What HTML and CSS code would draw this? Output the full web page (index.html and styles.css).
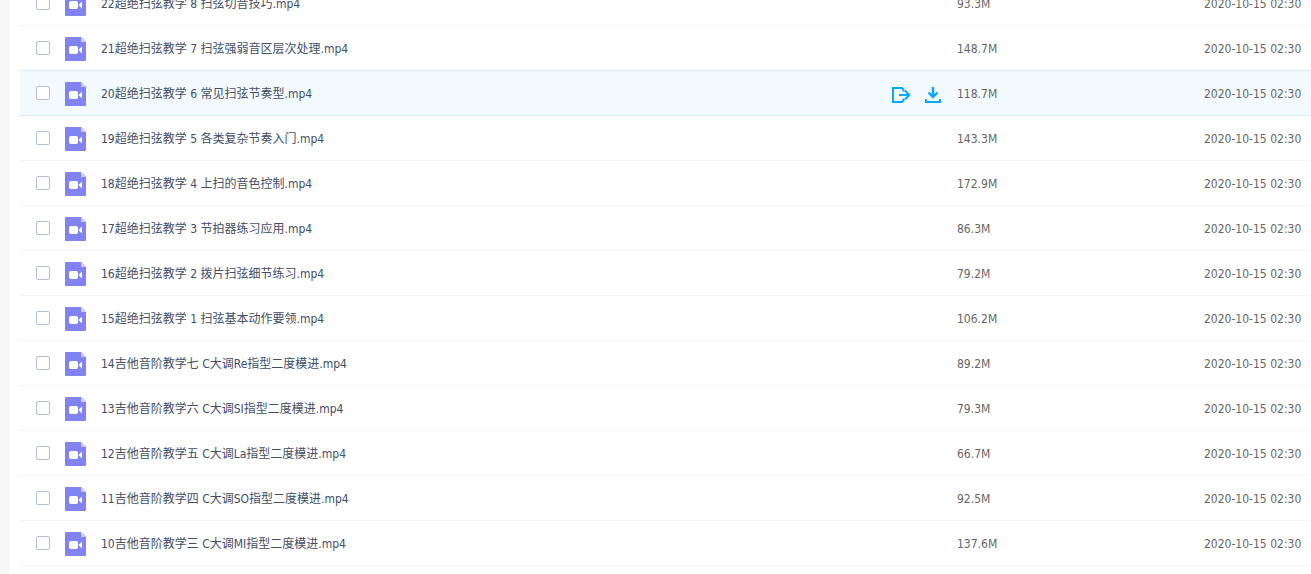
FILE: index.html
```
<!DOCTYPE html>
<html lang="zh-CN">
<head>
<meta charset="utf-8">
<title>全部文件</title>
<link rel="stylesheet" href="styles.css">
</head>
<body>

<svg class="sprite" xmlns="http://www.w3.org/2000/svg">
    <symbol id="icon-video" viewBox="0 0 21 24">
        <path fill="#8183f1" d="M1 0h15l5 5v18a1 1 0 0 1-1 1H1a1 1 0 0 1-1-1V1a1 1 0 0 1 1-1z"/>
        <path fill="#c9caf9" d="M16 0l5 5h-5z"/>
        <rect fill="#fff" x="4" y="9" width="9" height="8" rx="2"/>
        <path fill="#fff" d="M13.500 13L17 9.500v7z"/>
    </symbol>
</svg>

<main class="main">
    <table class="file-list">
        <colgroup>
            <col>
            <col class="col-size">
            <col class="col-time">
        </colgroup>
        <tbody id="files"></tbody>
    </table>
</main>

<template id="row-template">
    <tr class="file">
        <td>
            <div class="name">
                <input type="checkbox" class="check">
                <svg class="icon"><use href="#icon-video"/></svg>
                <label class="title"></label>
            </div>
        </td>
        <td class="size"></td>
        <td class="time"></td>
    </tr>
</template>

<template id="actions-template">
    <div class="actions">
        <button type="button" class="action" aria-label="分享">
            <svg width="21" height="18" viewBox="0 0 21 18" fill="none" stroke="#06a7ff" stroke-width="2">
                <path d="M13.500 5.500V3.500L12 2H3V16H12L13.500 14.500V12.500"/>
                <path d="M9 9H19M15 4.500L19.300 9L15 13.500"/>
            </svg>
        </button>
        <button type="button" class="action" aria-label="下载">
            <svg width="18" height="18" viewBox="0 0 18 18" fill="none" stroke="#06a7ff" stroke-width="2">
                <path stroke-width="2.400" d="M9 1V11M4.500 6.500L9 11L13.500 6.500"/>
                <path d="M2 13V16H16V13"/>
            </svg>
        </button>
    </div>
</template>

<script src="script.js"></script>
</body>
</html>
```

FILE: styles.css
```
body {
    margin: 0;
    overflow: hidden;
    background: #f7f7f7;
    color: #424e67;
    font: 12px/18px "DejaVu Sans Condensed", "Noto Sans CJK SC", sans-serif;
}

.sprite {
    display: none;
}

.main {
    box-sizing: border-box;
    min-height: 100vh;
    margin-left: 10px;
    padding-left: 10px;
    background: #fff;
    overflow: hidden;
}

/* list is scrolled part way through its first row */
.file-list {
    width: 100%;
    margin-top: -19px;
    border-spacing: 0;
    table-layout: fixed;
}

.col-size {
    width: 247px;
}

.col-time {
    width: 107px;
}

.file td {
    height: 42px;
    padding: 2px 0 0;
    border-bottom: 1px solid #f2f6fd;
    white-space: nowrap;
}

.file.hover td {
    background: #f3fafe;
    border-color: #d4ebfa;
    box-shadow: 0 -1px #d4ebfa;
}

.name {
    display: flex;
    align-items: center;
    padding: 0 15px 0 16px;
}

.check {
    appearance: none;
    box-sizing: border-box;
    width: 14px;
    height: 14px;
    margin: 0 15px 2px 0;
    border: 1px solid #b3c0cf;
    border-radius: 2px;
    background: #fff;
}

.icon {
    width: 21px;
    height: 24px;
    margin-right: 15px;
}

.title {
    flex: 1;
}

.actions {
    display: flex;
    gap: 13px;
    padding-top: 2px;
}

.action {
    display: block;
    padding: 0;
    border: 0;
    background: none;
    cursor: pointer;
}

.action svg {
    display: block;
}

.size,
.time {
    color: #666;
}
```

FILE: script.js
```
var files = [
    ['22超绝扫弦教学 8 扫弦切音技巧.mp4', '93.3M'],
    ['21超绝扫弦教学 7 扫弦强弱音区层次处理.mp4', '148.7M'],
    ['20超绝扫弦教学 6 常见扫弦节奏型.mp4', '118.7M'],
    ['19超绝扫弦教学 5 各类复杂节奏入门.mp4', '143.3M'],
    ['18超绝扫弦教学 4 上扫的音色控制.mp4', '172.9M'],
    ['17超绝扫弦教学 3 节拍器练习应用.mp4', '86.3M'],
    ['16超绝扫弦教学 2 拨片扫弦细节练习.mp4', '79.2M'],
    ['15超绝扫弦教学 1 扫弦基本动作要领.mp4', '106.2M'],
    ['14吉他音阶教学七 C大调Re指型二度模进.mp4', '89.2M'],
    ['13吉他音阶教学六 C大调SI指型二度模进.mp4', '79.3M'],
    ['12吉他音阶教学五 C大调La指型二度模进.mp4', '66.7M'],
    ['11吉他音阶教学四 C大调SO指型二度模进.mp4', '92.5M'],
    ['10吉他音阶教学三 C大调MI指型二度模进.mp4', '137.6M']
];
var hovered = 2;

var list = document.getElementById('files');
var rowTemplate = document.getElementById('row-template');
var actionsTemplate = document.getElementById('actions-template');

files.forEach(function (file, i) {
    var row = rowTemplate.content.cloneNode(true);
    var title = row.querySelector('.title');
    title.textContent = file[0];
    title.htmlFor = 'file-' + i;
    row.querySelector('.check').id = 'file-' + i;
    row.querySelector('.size').textContent = file[1];
    row.querySelector('.time').textContent = '2020-10-15 02:30';
    if (i === hovered) {
        row.querySelector('.file').classList.add('hover');
        row.querySelector('.name').appendChild(actionsTemplate.content.cloneNode(true));
    }
    list.appendChild(row);
});
```
